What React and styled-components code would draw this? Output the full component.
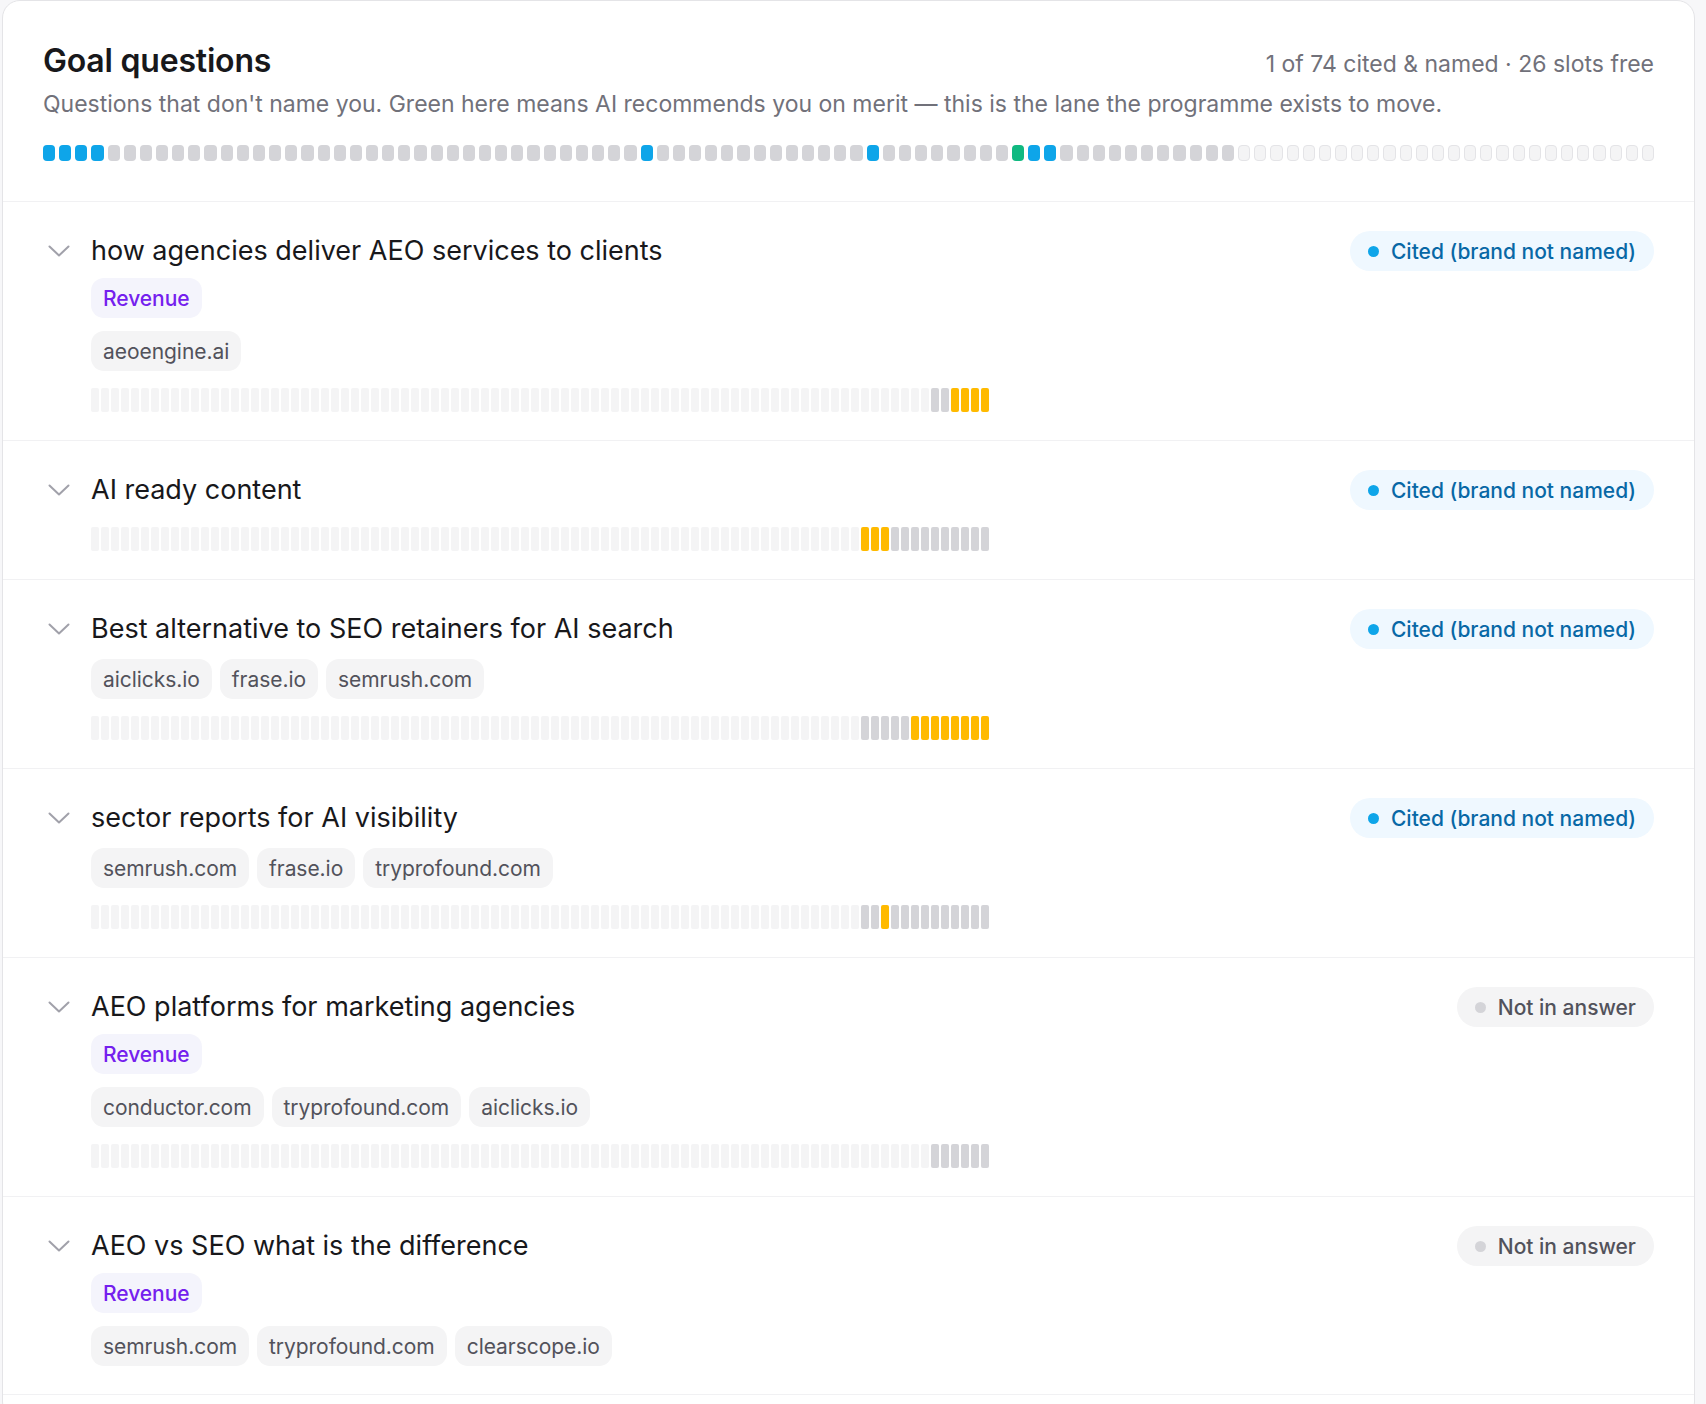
import React from "react";
import styled, { createGlobalStyle } from "styled-components";

const GlobalStyle = createGlobalStyle`
  * { box-sizing: border-box; }
  body {
    margin: 0;
    background: #f7f7f9;
    font-family: Inter, "Noto Sans", sans-serif;
    -webkit-font-smoothing: antialiased;
  }
`;

// overall tally across every tracked question: 74 used slots, 26 free
const OVERVIEW = (() => {
  const cells = Array(100).fill("empty");
  for (let i = 0; i < 74; i++) cells[i] = "miss";
  [0, 1, 2, 3, 37, 51, 61, 62].forEach((i) => (cells[i] = "cited"));
  cells[60] = "named";
  return cells;
})();

// run-length helper for the per-question history strips
const strip = (...runs) =>
  runs.flatMap(([kind, n]) => Array(n).fill(kind));

const QUESTIONS = [
  {
    title: "how agencies deliver AEO services to clients",
    tag: "Revenue",
    sources: ["aeoengine.ai"],
    status: "cited",
    history: strip(["off", 84], ["miss", 2], ["hit", 4]),
  },
  {
    title: "AI ready content",
    sources: [],
    status: "cited",
    history: strip(["off", 77], ["hit", 3], ["miss", 10]),
  },
  {
    title: "Best alternative to SEO retainers for AI search",
    sources: ["aiclicks.io", "frase.io", "semrush.com"],
    status: "cited",
    history: strip(["off", 77], ["miss", 5], ["hit", 8]),
  },
  {
    title: "sector reports for AI visibility",
    sources: ["semrush.com", "frase.io", "tryprofound.com"],
    status: "cited",
    history: strip(["off", 77], ["miss", 2], ["hit", 1], ["miss", 10]),
  },
  {
    title: "AEO platforms for marketing agencies",
    tag: "Revenue",
    sources: ["conductor.com", "tryprofound.com", "aiclicks.io"],
    status: "absent",
    history: strip(["off", 84], ["miss", 6]),
  },
  {
    title: "AEO vs SEO what is the difference",
    tag: "Revenue",
    sources: ["semrush.com", "tryprofound.com", "clearscope.io"],
    status: "absent",
  },
];

const STATUS = {
  cited: { label: "Cited (brand not named)", bg: "#eff8ff", fg: "#0868a6", dot: "#0ea5e9" },
  absent: { label: "Not in answer", bg: "#f4f4f5", fg: "#52525b", dot: "#d4d4d8" },
};

const Page = styled.div`
  padding: 0 11px 0 2px;
`;

const Card = styled.section`
  background: #fff;
  border: 1px solid #e4e4e7;
  border-radius: 18px;
  padding-bottom: 24px;
`;

const Header = styled.header`
  padding: 42px 40px 40px;
  border-bottom: 1px solid #f1f1f3;
`;

const HeaderTop = styled.div`
  display: flex;
  align-items: baseline;
  justify-content: space-between;
`;

const Title = styled.h2`
  margin: 0;
  font-size: 32px;
  line-height: 36px;
  font-weight: 600;
  color: #18181b;
  letter-spacing: -0.2px;
`;

const Tally = styled.span`
  font-size: 23px;
  color: #71717a;
`;

const Lede = styled.p`
  margin: 11px 0 0;
  font-size: 23px;
  line-height: 28px;
  color: #71717a;
`;

const Overview = styled.div`
  display: grid;
  grid-template-columns: repeat(100, 1fr);
  gap: 4px;
  margin-top: 27px;
  height: 16px;
`;

const SLOT = {
  cited: "#0ea5e9",
  named: "#10b981",
  miss: "#d4d4d8",
  empty: "#f4f4f5",
};

const Slot = styled.span`
  border-radius: 4px;
  background: ${(p) => SLOT[p.$kind]};
  border: ${(p) => (p.$kind === "empty" ? "1px solid #e4e4e7" : "none")};
`;

const Row = styled.article`
  display: flex;
  align-items: flex-start;
  padding: 29px 40px 28px;
  border-bottom: 1px solid #f1f1f3;
`;

const Toggle = styled.button`
  flex: none;
  width: 48px;
  height: 40px;
  padding: 0 0 0 5px;
  border: 0;
  background: none;
  display: flex;
  align-items: center;
  color: #a1a1aa;
  cursor: pointer;
`;

const Body = styled.div`
  flex: 1;
  min-width: 0;
`;

const Question = styled.h3`
  margin: 0;
  font-size: 27px;
  line-height: 40px;
  font-weight: 400;
  color: #18181b;
`;

const ChipRow = styled.div`
  display: flex;
  flex-wrap: wrap;
  gap: 8px;
  margin-top: ${(p) => p.$gap}px;
`;

const Chip = styled.span`
  height: 40px;
  padding: 0 12px;
  display: inline-flex;
  align-items: center;
  border-radius: 13px;
  font-size: 21px;
  letter-spacing: -0.05px;
  background: ${(p) => (p.$tag ? "#f4f4fc" : "#f4f4f5")};
  color: ${(p) => (p.$tag ? "#7420ee" : "#52525b")};
  font-weight: ${(p) => (p.$tag ? 500 : 400)};
`;

const History = styled.div`
  display: flex;
  gap: 2px;
  margin-top: 17px;
  height: 24px;
`;

const HIST = { off: "#f4f4f5", miss: "#d4d4d8", hit: "#ffba00" };

const Tick = styled.span`
  width: 8px;
  border-radius: 2px;
  background: ${(p) => HIST[p.$kind]};
`;

const Pill = styled.span`
  flex: none;
  height: 40px;
  padding: 0 18px;
  display: inline-flex;
  align-items: center;
  gap: 12px;
  border-radius: 20px;
  font-size: 21px;
  font-weight: 500;
  background: ${(p) => p.$bg};
  color: ${(p) => p.$fg};
`;

const Dot = styled.i`
  width: 11px;
  height: 11px;
  border-radius: 50%;
  background: ${(p) => p.$color};
`;

const Chevron = () => (
  <svg width="22" height="12" viewBox="0 0 22 12" fill="none">
    <path
      d="M1.5 1.5 L11 10.5 L20.5 1.5"
      stroke="currentColor"
      strokeWidth="2"
      strokeLinecap="round"
      strokeLinejoin="round"
    />
  </svg>
);

const QuestionRow = ({ q }) => {
  const s = STATUS[q.status];
  return (
    <Row>
      <Toggle aria-label="Expand">
        <Chevron />
      </Toggle>
      <Body>
        <Question>{q.title}</Question>
        {q.tag && (
          <ChipRow $gap={7}>
            <Chip $tag>{q.tag}</Chip>
          </ChipRow>
        )}
        {q.sources.length > 0 && (
          <ChipRow $gap={q.tag ? 13 : 10}>
            {q.sources.map((d) => (
              <Chip key={d}>{d}</Chip>
            ))}
          </ChipRow>
        )}
        {q.history && (
          <History>
            {q.history.map((k, i) => (
              <Tick key={i} $kind={k} />
            ))}
          </History>
        )}
      </Body>
      <Pill $bg={s.bg} $fg={s.fg}>
        <Dot $color={s.dot} />
        {s.label}
      </Pill>
    </Row>
  );
};

export default function App() {
  return (
    <Page>
      <GlobalStyle />
      <Card>
        <Header>
          <HeaderTop>
            <Title>Goal questions</Title>
            <Tally>1 of 74 cited &amp; named · 26 slots free</Tally>
          </HeaderTop>
          <Lede>
            Questions that don't name you. Green here means AI recommends you on
            merit — this is the lane the programme exists to move.
          </Lede>
          <Overview>
            {OVERVIEW.map((k, i) => (
              <Slot key={i} $kind={k} />
            ))}
          </Overview>
        </Header>
        {QUESTIONS.map((q) => (
          <QuestionRow key={q.title} q={q} />
        ))}
      </Card>
    </Page>
  );
}
